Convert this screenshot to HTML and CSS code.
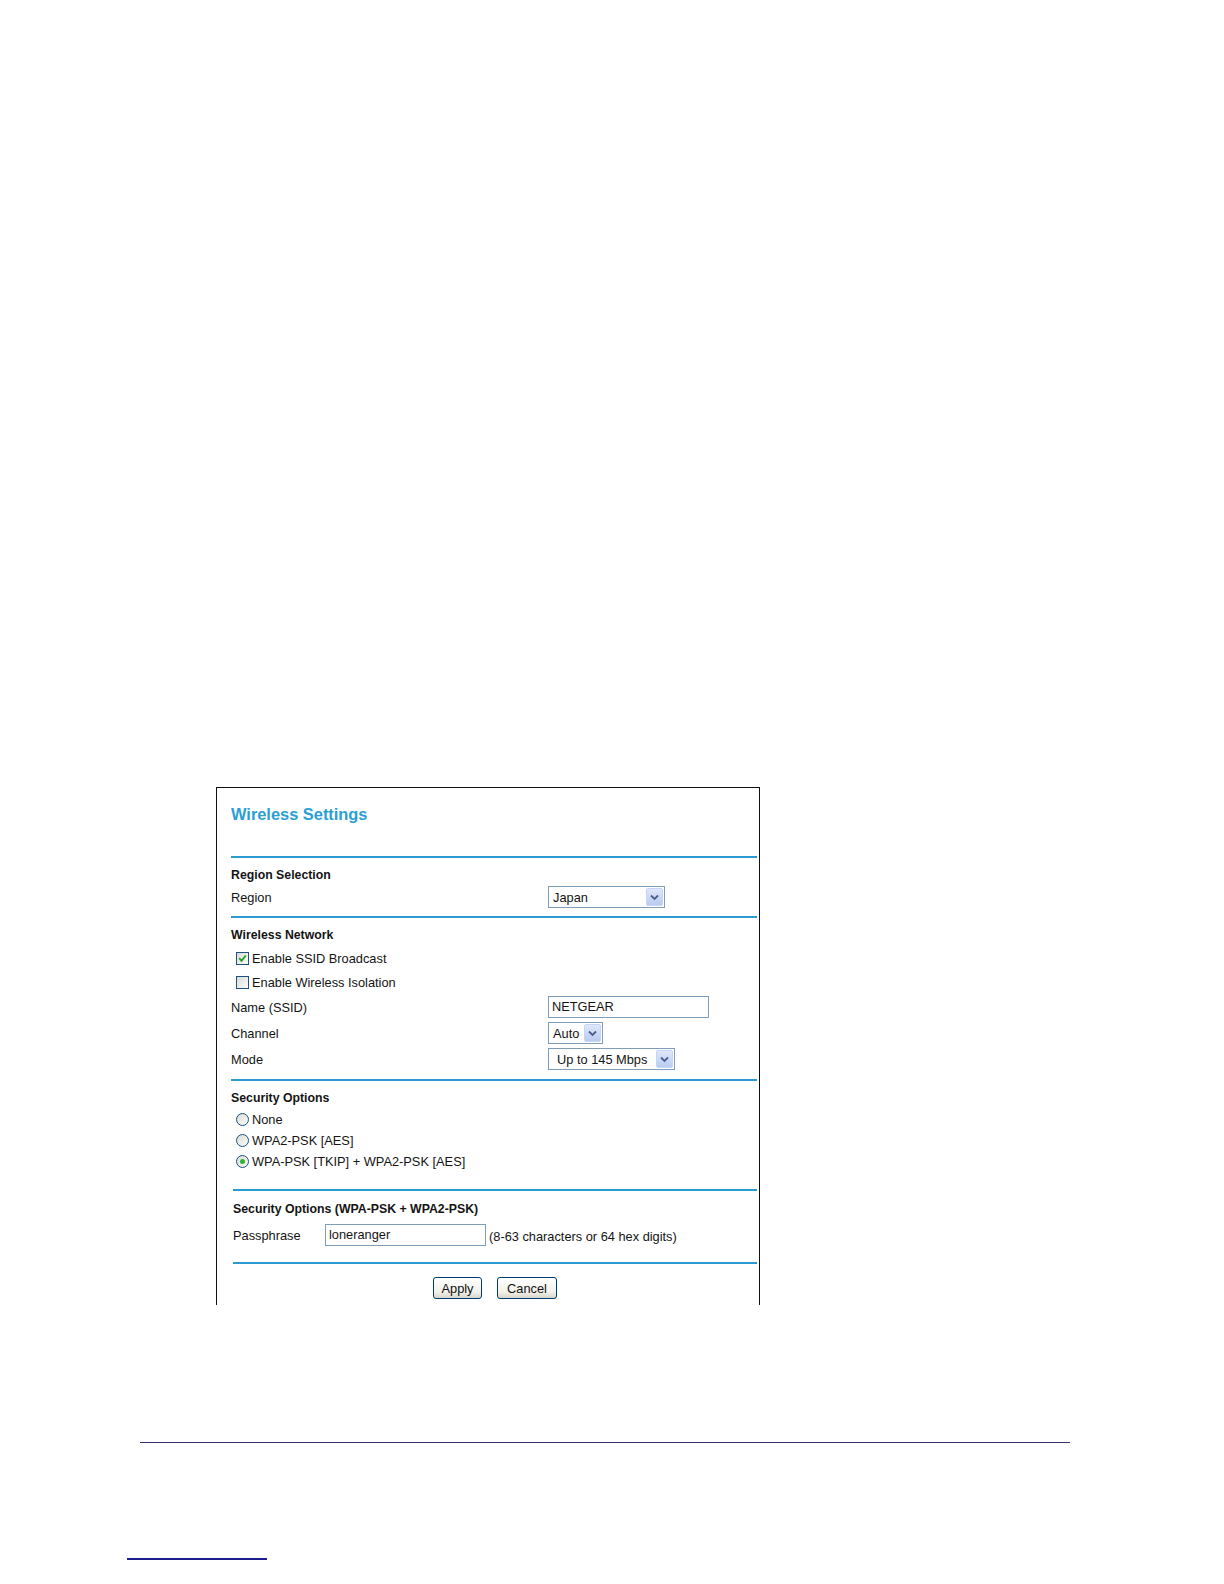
FILE: index.html
```html
<!DOCTYPE html>
<html>
<head>
<meta charset="utf-8">
<title>Wireless Settings</title>
<link rel="stylesheet" href="styles.css">
</head>
<body>
<div class="page">
  <div class="figure">
    <h1 class="title">Wireless Settings</h1>
    <div class="rule"></div>

    <div class="section">
      <div class="heading">Region Selection</div>
      <div class="row r22">
        <span class="label">Region</span>
        <div class="select w-region"><span class="val">Japan</span><span class="drop"><svg width="9" height="7" viewBox="0 0 9 7"><path d="M1 1.5 L4.5 5 L8 1.5" stroke="#4a5f8c" stroke-width="1.8" fill="none"/></svg></span></div>
      </div>
    </div>
    <div class="rule r2"></div>

    <div class="section">
      <div class="heading">Wireless Network</div>
      <div class="row r24 opt">
        <span class="check on"><svg width="9" height="9" viewBox="0 0 9 9"><path d="M1.2 4.2 L3.5 6.8 L7.8 1.5" stroke="#21a121" stroke-width="1.9" fill="none"/></svg></span>
        <span>Enable SSID Broadcast</span>
      </div>
      <div class="row r24 opt">
        <span class="check"></span>
        <span>Enable Wireless Isolation</span>
      </div>
      <div class="row r26">
        <span class="label">Name (SSID)</span>
        <div class="input w-ssid">NETGEAR</div>
      </div>
      <div class="row r26">
        <span class="label">Channel</span>
        <div class="select w-channel"><span class="val">Auto</span><span class="drop"><svg width="9" height="7" viewBox="0 0 9 7"><path d="M1 1.5 L4.5 5 L8 1.5" stroke="#4a5f8c" stroke-width="1.8" fill="none"/></svg></span></div>
      </div>
      <div class="row r26">
        <span class="label">Mode</span>
        <div class="select w-mode"><span class="val wide">Up to 145 Mbps</span><span class="drop"><svg width="9" height="7" viewBox="0 0 9 7"><path d="M1 1.5 L4.5 5 L8 1.5" stroke="#4a5f8c" stroke-width="1.8" fill="none"/></svg></span></div>
      </div>
    </div>
    <div class="rule r3"></div>

    <div class="section">
      <div class="heading">Security Options</div>
      <div class="row r21 opt">
        <span class="radio"></span>
        <span>None</span>
      </div>
      <div class="row r21 opt">
        <span class="radio"></span>
        <span>WPA2-PSK [AES]</span>
      </div>
      <div class="row r21 opt">
        <span class="radio on"><span class="dot"></span></span>
        <span>WPA-PSK [TKIP] + WPA2-PSK [AES]</span>
      </div>
    </div>
    <div class="rule r4 inset"></div>

    <div class="section inset">
      <div class="heading h7">Security Options (WPA-PSK + WPA2-PSK)</div>
      <div class="row r26 pass">
        <span class="plabel">Passphrase</span>
        <div class="input w-pass">loneranger</div>
        <span class="hint">(8-63 characters or 64 hex digits)</span>
      </div>
    </div>
    <div class="rule r5 inset"></div>

    <div class="buttons">
      <button class="btn b-apply">Apply</button>
      <button class="btn b-cancel">Cancel</button>
    </div>
  </div>

  <div class="footer-rule"></div>
  <div class="link-rule"></div>
</div>
</body>
</html>
```

FILE: styles.css
```css
html, body {
  margin: 0;
  padding: 0;
  background: #ffffff;
}

.page {
  width: 1224px;
  height: 1584px;
  overflow: hidden;
  font-family: "Liberation Sans", Arial, sans-serif;
  font-size: 12.8px;
  color: #141414;
  display: flow-root;
}

.figure {
  margin: 787px 0 0 216px;
  width: 542px;
  height: 517px;
  border: 1px solid #111;
  border-bottom: none;
  padding: 0 2px 0 14px;
  box-sizing: content-box;
  width: 526px;
  display: flow-root;
}

.title {
  margin: 16px 0 32px 0;
  font-size: 16.4px;
  line-height: 20px;
  font-weight: bold;
  color: #2a9fd4;
}

.rule {
  height: 2px;
  background: #2a9ad0;
}

.rule.r2 { margin-top: 8px; }
.rule.r3 { margin-top: 7px; }
.rule.r4 { margin-top: 17px; }
.rule.r5 { margin-top: 14px; }

.inset { margin-left: 2px; }

.section {
  padding-top: 6px;
}

.heading {
  font-weight: bold;
  font-size: 12.3px;
  line-height: 22px;
  height: 22px;
}

.heading.h7 { margin-top: 1px; }

.row {
  display: flex;
  align-items: center;
}

.r21 { height: 21px; }
.r22 { height: 22px; }
.r24 { height: 24px; }
.r26 { height: 26px; }

.label {
  width: 317px;
  flex: none;
}

.opt {
  padding-left: 5px;
  gap: 3px;
}

.pass { margin-top: 2px; }

.plabel {
  width: 92px;
  flex: none;
}

.hint {
  margin-left: 3px;
  padding-top: 2px;
}

.select {
  display: flex;
  align-items: center;
  height: 22px;
  box-sizing: border-box;
  border: 1px solid #7f9db9;
  background: #fff;
}

.select .val {
  flex: 1;
  padding-left: 4px;
}

.select .val.wide { padding-left: 8px; }

.drop {
  width: 17px;
  height: 18px;
  margin-right: 1px;
  box-sizing: border-box;
  border: 1px solid #c6d4f5;
  border-radius: 2px;
  background: linear-gradient(#dfe7fb, #b9cbf1);
  display: flex;
  align-items: center;
  justify-content: center;
}

.w-region { width: 117px; }
.w-channel { width: 55px; }
.w-mode { width: 127px; }

.input {
  height: 22px;
  box-sizing: border-box;
  border: 1px solid #7f9db9;
  background: #fff;
  padding-left: 3px;
  line-height: 20px;
}

.w-ssid { width: 161px; }
.w-pass { width: 161px; }

.check {
  width: 13px;
  height: 13px;
  box-sizing: border-box;
  border: 1px solid #1c5180;
  background: linear-gradient(135deg, #dcdcd5, #fbfbf9);
  display: flex;
  align-items: center;
  justify-content: center;
  flex: none;
}

.radio {
  width: 13px;
  height: 13px;
  box-sizing: border-box;
  border: 1px solid #1c5180;
  border-radius: 50%;
  background: linear-gradient(135deg, #dcdcd5, #fbfbf9);
  display: flex;
  align-items: center;
  justify-content: center;
  flex: none;
}

.dot {
  width: 5px;
  height: 5px;
  border-radius: 50%;
  background: #33b533;
}

.buttons {
  margin-top: 13px;
  margin-left: 2px;
  display: flex;
  justify-content: center;
  gap: 15px;
}

.btn {
  height: 22px;
  box-sizing: border-box;
  border: 1px solid #003c74;
  border-radius: 3px;
  background: linear-gradient(#ffffff, #f2f1ea 70%, #d8d6c8);
  font-family: "Liberation Sans", Arial, sans-serif;
  font-size: 12.8px;
  color: #111;
  padding: 0;
}

.b-apply { width: 49px; }
.b-cancel { width: 60px; }

.footer-rule {
  margin: 137px 0 0 140px;
  width: 930px;
  height: 1px;
  background: #3d2f6a;
}

.link-rule {
  margin: 115px 0 0 127px;
  width: 140px;
  height: 2px;
  background: #1c1c8e;
}
```
